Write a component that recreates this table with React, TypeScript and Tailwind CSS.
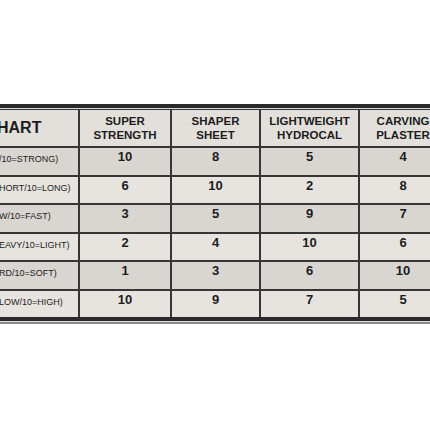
const cols = [
  ["SUPER", "STRENGTH"],
  ["SHAPER", "SHEET"],
  ["LIGHTWEIGHT", "HYDROCAL"],
  ["CARVING", "PLASTER"],
];

const rows = [
  { label: "/10=STRONG)", values: [10, 8, 5, 4] },
  { label: "HORT/10=LONG)", values: [6, 10, 2, 8] },
  { label: "W/10=FAST)", values: [3, 5, 9, 7] },
  { label: "EAVY/10=LIGHT)", values: [2, 4, 10, 6] },
  { label: "RD/10=SOFT)", values: [1, 3, 6, 10] },
  { label: "LOW/10=HIGH)", values: [10, 9, 7, 5] },
];

export default function App() {
  return (
    <div className="h-[430px] w-[430px] overflow-hidden bg-white pt-[104px] font-['Liberation_Sans',Arial,sans-serif] text-[#1c1c1c]">
      <div className="w-[460px]">
        <div className="h-[4px] bg-[#2a2a2a]" />
        <div className="h-[1px] bg-[#d8d6d2]" />
        <div className="grid grid-cols-[78px_90px_87px_97px_86px] grid-rows-[36px_repeat(6,26.5px)] gap-[2px] bg-[#363636] pt-[1px]">
          <div className="flex items-center bg-[#e3e0db]">
            <span className="-ml-[3px] text-[16px] font-bold leading-none">HART</span>
          </div>
          {cols.map((c) => (
            <div
              key={c[0]}
              className="flex flex-col items-center justify-center bg-[#e3e0db] text-[11.5px] font-bold leading-[14px]"
            >
              <span>{c[0]}</span>
              <span>{c[1]}</span>
            </div>
          ))}
          {rows.map((r, i) => {
            const bg = i % 2 === 0 ? "bg-[#d9d6d1]" : "bg-[#e7e4df]";
            return [
              <div key={r.label} className={`${bg} overflow-hidden whitespace-nowrap pt-[5px]`}>
                <span className="-ml-[1px] block text-[9px] leading-[12px]">{r.label}</span>
              </div>,
              ...r.values.map((v, j) => (
                <div
                  key={r.label + j}
                  className={`${bg} pt-[2px] text-center text-[13px] font-bold leading-[14px]`}
                >
                  {v}
                </div>
              )),
            ];
          })}
        </div>
        <div className="h-[4px] bg-[#2a2a2a]" />
        <div className="h-[1px] bg-[#dcdad6]" />
        <div className="h-[2px] bg-[#8a8986]" />
      </div>
    </div>
  );
}
